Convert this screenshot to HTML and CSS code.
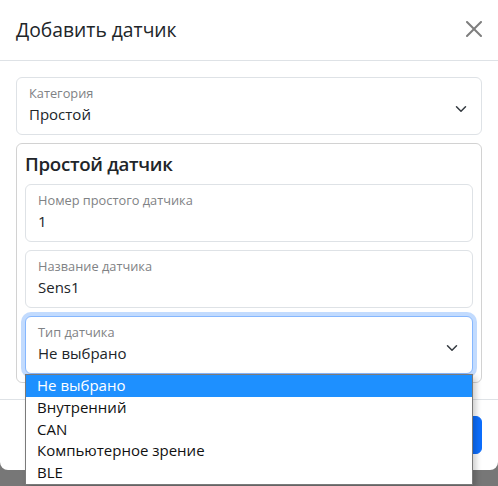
FILE: index.html
```html
<!DOCTYPE html>
<html lang="ru">
<head>
<meta charset="utf-8">
<title>Добавить датчик</title>
<link rel="stylesheet" href="styles.css">
</head>
<body>
<div class="modal">
  <div class="modal-header">
    <h5 class="modal-title">Добавить датчик</h5>
    <button class="btn-close" type="button" aria-label="Закрыть">
      <svg width="16" height="16" viewBox="0 0 16 16"><path d="M.293.293a1 1 0 0 1 1.414 0L8 6.586 14.293.293a1 1 0 1 1 1.414 1.414L9.414 8l6.293 6.293a1 1 0 0 1-1.414 1.414L8 9.414l-6.293 6.293a1 1 0 0 1-1.414-1.414L6.586 8 .293 1.707a1 1 0 0 1 0-1.414"/></svg>
    </button>
  </div>
  <div class="modal-body">
    <div class="field">
      <div class="field-text">
        <span class="field-label">Категория</span>
        <span class="field-value">Простой</span>
      </div>
      <svg class="chevron" width="12" height="12" viewBox="0 0 16 16"><path d="m2 5 6 6 6-6"/></svg>
    </div>
    <div class="card">
      <h5 class="card-title">Простой датчик</h5>
      <div class="field">
        <div class="field-text">
          <span class="field-label">Номер простого датчика</span>
          <span class="field-value">1</span>
        </div>
      </div>
      <div class="field">
        <div class="field-text">
          <span class="field-label">Название датчика</span>
          <span class="field-value">Sens1</span>
        </div>
      </div>
      <div class="field field-focus">
        <div class="field-text">
          <span class="field-label">Тип датчика</span>
          <span class="field-value">Не выбрано</span>
        </div>
        <svg class="chevron" width="12" height="12" viewBox="0 0 16 16"><path d="m2 5 6 6 6-6"/></svg>
      </div>
    </div>
  </div>
  <div class="modal-footer">
    <button class="btn-primary" type="button">Добавить</button>
  </div>
</div>
<ul class="dropdown">
  <li class="option option-active">Не выбрано</li>
  <li class="option">Внутренний</li>
  <li class="option">CAN</li>
  <li class="option">Компьютерное зрение</li>
  <li class="option">BLE</li>
</ul>
</body>
</html>
```

FILE: styles.css
```css
* { box-sizing: border-box; }
html, body { margin: 0; padding: 0; }
body {
  width: 498px;
  height: 486px;
  overflow: hidden;
  background: #777777;
  font-family: "Open Sans", "Noto Sans", "Liberation Sans", sans-serif;
  color: #212529;
  position: relative;
}
.modal {
  width: 498px;
  background: #ffffff;
  border-radius: 0 0 8px 8px;
}
.modal-header {
  height: 61px;
  padding: 0 16px;
  display: flex;
  align-items: center;
  justify-content: space-between;
  border-bottom: 1px solid #dee2e6;
}
.modal-title {
  margin: 0;
  font-size: 19.3px;
  line-height: 30px;
  font-weight: 400;
  color: #212529;
}
.btn-close {
  width: 16px;
  height: 16px;
  padding: 0;
  margin: 0 0 2px 0;
  border: 0;
  background: transparent;
  display: flex;
}
.btn-close svg { fill: #000; opacity: 0.5; }
.modal-body {
  padding: 16px;
  display: flex;
  flex-direction: column;
  gap: 8px;
}
.field {
  height: 58px;
  border: 1px solid #dee2e6;
  border-radius: 6px;
  background: #fff;
  padding: 6px 12px 0 12px;
  display: flex;
  align-items: center;
  justify-content: space-between;
}
.field-text {
  display: flex;
  flex-direction: column;
  align-self: flex-start;
}
.field-label {
  font-size: 12.8px;
  line-height: 19px;
  color: #7f8285;
}
.field-value {
  font-size: 15px;
  line-height: 22px;
  color: #212529;
}
.chevron {
  margin-right: 2px;
  fill: none;
  stroke: #343a40;
  stroke-width: 2;
  stroke-linecap: round;
  stroke-linejoin: round;
}
.field-focus {
  border-color: #86b7fe;
  box-shadow: 0 0 0 4px rgba(13, 110, 253, 0.25);
}
.card {
  border: 1px solid rgba(0, 0, 0, 0.175);
  border-radius: 6px;
  padding: 8px;
  display: flex;
  flex-direction: column;
  gap: 8px;
}
.card-title {
  margin: 0;
  font-size: 18.7px;
  line-height: 24px;
  font-weight: 600;
  letter-spacing: -0.3px;
  color: #212529;
}
.modal-footer {
  border-top: 1px solid #dee2e6;
  padding: 12px;
  height: 71px;
  display: flex;
  justify-content: flex-end;
  align-items: flex-start;
}
.btn-primary {
  margin: 4px;
  height: 38px;
  padding: 6px 12px;
  border: 1px solid #0d6efd;
  border-radius: 6px;
  background: #0d6efd;
  color: #fff;
  font-family: inherit;
  font-size: 15px;
}
.dropdown {
  position: absolute;
  left: 25px;
  top: 374px;
  width: 448px;
  margin: 0;
  padding: 0;
  list-style: none;
  background: #fff;
  border: 1px solid #7a7a7a;
  box-shadow: 3px 3px 6px rgba(0, 0, 0, 0.2);
}
.option {
  font-size: 15px;
  line-height: 21.8px;
  padding-left: 11px;
  color: #111;
}
.option-active {
  background: #1e90ff;
  color: #fff;
}
```
